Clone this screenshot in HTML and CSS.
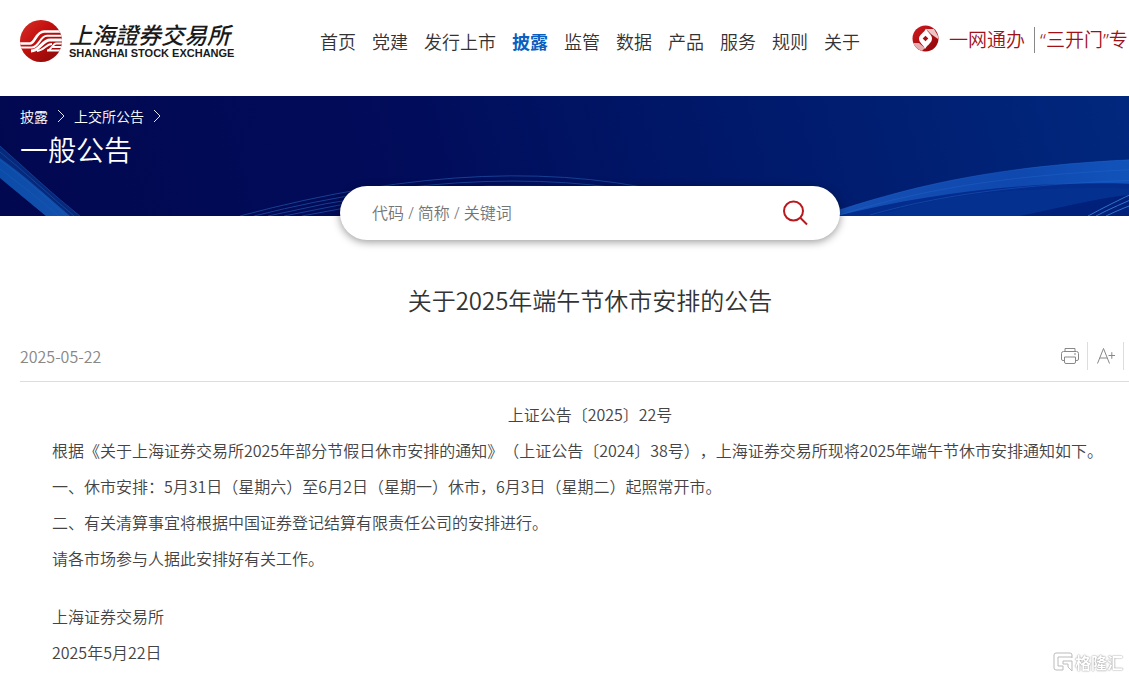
FILE: index.html
```html
<!DOCTYPE html>
<html lang="zh-CN">
<head>
<meta charset="utf-8">
<title>关于2025年端午节休市安排的公告</title>
<link rel="stylesheet" href="styles.css">
</head>
<body>
<div class="page">
  <header class="header">
    <a class="logo" href="#" aria-label="上海證券交易所">
      <svg class="logo-mark" viewBox="0 0 42 42" aria-hidden="true">
        <defs>
          <linearGradient id="mark" x1="0" y1="0" x2="1" y2="1">
            <stop offset="0" stop-color="#d4322c"/>
            <stop offset="0.4" stop-color="#c4100e"/>
            <stop offset="1" stop-color="#860808"/>
          </linearGradient>
          <clipPath id="disc"><circle cx="21" cy="21" r="21"/></clipPath>
        </defs>
        <g clip-path="url(#disc)">
          <rect width="42" height="42" fill="url(#mark)"/>
          <g fill="none" stroke="#fff">
            <path d="M0 23.500H10C15 23.500 16 11.500 24 11.500H42" stroke-width="2.600"/>
            <path d="M0 27.500H12C19 27.500 20 15.800 27 15.800H42" stroke-width="2"/>
            <path d="M11 31C20 31 22 20 30 20H42" stroke-width="3"/>
            <path d="M17 31C24 30.500 26 24 32 24" stroke-width="2"/>
            <path d="M42 23.500H36C33 23.500 31 30.500 27 30.500H42M32 27H42" stroke-width="1.800"/>
          </g>
        </g>
      </svg>
      <span class="logo-text">
        <span class="logo-zh" lang="zh-TW">上海證券交易所</span>
        <span class="logo-en">SHANGHAI STOCK EXCHANGE</span>
      </span>
    </a>
    <nav class="nav">
      <a href="#">首页</a>
      <a href="#">党建</a>
      <a href="#">发行上市</a>
      <a class="active" href="#">披露</a>
      <a href="#">监管</a>
      <a href="#">数据</a>
      <a href="#">产品</a>
      <a href="#">服务</a>
      <a href="#">规则</a>
      <a href="#">关于</a>
    </nav>
    <div class="services">
      <svg class="services-mark" viewBox="0 0 27 27" aria-hidden="true">
        <defs>
          <linearGradient id="seal" x1="0" y1="0" x2="1" y2="1">
            <stop offset="0" stop-color="#d01a1e"/>
            <stop offset="1" stop-color="#8c0508"/>
          </linearGradient>
        </defs>
        <circle cx="13.500" cy="13.500" r="13" fill="url(#seal)"/>
        <path d="M14 4H22L26 11V14L19 9Z" fill="#efc6c7"/>
        <path d="M1 18H7L13 23L10 26Q4 24 1 18Z" fill="#e6aeb0"/>
        <path d="M14 3.500C16 8 20 9.500 20 13.500C20 18 15.500 19.500 13 24C11.500 19.500 7 18 7 13.500C7 9.500 12 8 14 3.500Z" fill="#fff"/>
        <path d="M13.500 10.700L16.300 13.500L13.500 16.300L10.700 13.500Z" fill="#a60c12"/>
      </svg>
      <a href="#">一网通办</a>
      <a class="divided" href="#">“三开门”专</a>
    </div>
  </header>

  <section class="banner">
    <svg class="waves" viewBox="0 0 1180 120" preserveAspectRatio="none" aria-hidden="true">
      <defs>
        <linearGradient id="ribbon" x1="0" y1="0" x2="1" y2="0">
          <stop offset="0" stop-color="#1650b4"/>
          <stop offset="0.5" stop-color="#0f48ae"/>
          <stop offset="1" stop-color="#1257bf"/>
        </linearGradient>
        <linearGradient id="beam" x1="0" y1="0" x2="1" y2="1">
          <stop offset="0" stop-color="#0b4ba8"/>
          <stop offset="1" stop-color="#1250ad"/>
        </linearGradient>
      </defs>
      <path d="M0 50C25 72 52 98 80 120H46L0 82Z" fill="#06297c"/>
      <path d="M0 62C25 80 48 101 70 120H46L0 82Z" fill="url(#beam)"/>
      <g fill="none" stroke="#1f5cb8" stroke-width="1" opacity=".5">
        <path d="M0 50C25 72 52 98 80 120"/>
        <path d="M0 56C25 76 50 100 74 120"/>
        <path d="M0 64C22 80 46 101 66 120"/>
        <path d="M0 73C20 88 40 104 59 120"/>
      </g>
      <g fill="none" stroke="#173f92" stroke-width="1">
        <path d="M240 120Q500 50 690 102"/>
        <path d="M254 120Q500 58 690 106"/>
        <path d="M268 120Q500 65 690 110"/>
        <path d="M284 120Q500 72 690 114"/>
        <path d="M302 120Q500 78 690 118"/>
      </g>
      <path d="M836 115C920 88 1010 66 1180 62V120H836Z" fill="#032c8c"/>
      <path d="M836 115C920 88 1010 66 1180 62V90C1060 82 950 92 836 120Z" fill="url(#ribbon)"/>
      <path d="M900 113C960 95 1050 88 1180 94V98C1110 94 1070 112 1020 120H870Z" fill="#043090"/>
      <path d="M1020 120C1070 110 1110 98 1180 94V120Z" fill="#00207a"/>
      <g fill="none" stroke="#2469ce" stroke-width="1" opacity=".4">
        <path d="M836 115C920 88 1010 66 1180 62"/>
        <path d="M840 119C930 90 1030 76 1180 72"/>
        <path d="M870 119C950 96 1040 86 1180 83"/>
      </g>
      <g fill="none" stroke="#2f74d0" stroke-width="1">
        <path d="M1088 120Q1110 108 1140 94"/>
        <path d="M1096 120Q1115 110 1145 98"/>
        <path d="M1106 120Q1120 113 1150 102"/>
      </g>
    </svg>
    <div class="banner-content">
      <nav class="crumbs" aria-label="位置">
        <a href="#">披露</a>
        <svg viewBox="0 0 8 14" aria-hidden="true"><path d="M1 1L7 7L1 13"/></svg>
        <a href="#">上交所公告</a>
        <svg viewBox="0 0 8 14" aria-hidden="true"><path d="M1 1L7 7L1 13"/></svg>
      </nav>
      <h1 class="section-title">一般公告</h1>
    </div>
    <form class="search">
      <input type="text" aria-label="搜索" placeholder="代码 / 简称 / 关键词">
      <button type="button" aria-label="搜索">
        <svg viewBox="0 0 26 26" aria-hidden="true"><circle cx="11.500" cy="11" r="9.500"/><path d="M18 17.500L25 24.500"/></svg>
      </button>
    </form>
  </section>

  <main class="article">
    <h2 class="title">关于2025年端午节休市安排的公告</h2>
    <div class="meta">
      <time datetime="2025-05-22">2025-05-22</time>
      <div class="tools">
        <button type="button" aria-label="打印">
          <svg viewBox="0 0 20 18" aria-hidden="true"><path d="M5 4.500V1.500H15V4.500M4.500 13.500H3A1.500 1.500 0 0 1 1.500 12V6.500A2 2 0 0 1 3.500 4.500H16.500A2 2 0 0 1 18.500 6.500V12A1.500 1.500 0 0 1 17 13.500H15.500M4.500 10H15.500V15A1.500 1.500 0 0 1 14 16.500H6A1.500 1.500 0 0 1 4.500 15ZM14 7H16"/></svg>
        </button>
        <button type="button" aria-label="放大字号">
          <svg viewBox="0 0 20 18" aria-hidden="true"><path d="M1.500 16.500L7.500 1.500L13.500 16.500M3.800 11H11.200M12.500 8.500H19M15.800 5.200V11.800"/></svg>
        </button>
      </div>
    </div>
    <div class="body">
      <p class="number">上证公告〔2025〕22号</p>
      <p>根据《关于上海证券交易所2025年部分节假日休市安排的通知》（上证公告〔2024〕38号），上海证券交易所现将2025年端午节休市安排通知如下。</p>
      <p>一、休市安排：5月31日（星期六）至6月2日（星期一）休市，6月3日（星期二）起照常开市。</p>
      <p>二、有关清算事宜将根据中国证券登记结算有限责任公司的安排进行。</p>
      <p>请各市场参与人据此安排好有关工作。</p>
      <div class="signature">
        <p>上海证券交易所</p>
        <p>2025年5月22日</p>
      </div>
    </div>
  </main>
</div>
<div class="watermark">
  <svg viewBox="0 0 20 20" aria-hidden="true"><path d="M19 6V3Q19 1 17 1H3Q1 1 1 3V16Q1 18 3 18H10V14H5V5H19M10 9H19V19L15 15V12H10Z"/></svg>
  <span>格隆汇</span>
</div>
</body>
</html>
```
FILE: styles.css
```css
* {
  box-sizing: border-box;
}

body {
  margin: 0;
  overflow: hidden auto;
  background: #fff;
  color: #333;
  font-family: "Noto Sans CJK SC", sans-serif;
  font-size: 16px;
  font-weight: 350;
  text-spacing-trim: space-all;
}

a {
  color: inherit;
  text-decoration: none;
}

p,
h1,
h2 {
  margin: 0;
  font-weight: 350;
}

button {
  padding: 0;
  border: 0;
  background: none;
}

.page {
  min-width: 1180px;
}

.header {
  display: grid;
  grid-template-columns: 1fr auto 1fr;
  align-items: center;
  padding: 0 20px;
  height: 96px;
}

.logo {
  display: flex;
  align-items: center;
  gap: 7px;
  padding-bottom: 14px;
}

.logo-mark {
  width: 42px;
  height: 42px;
}

.logo-text {
  display: flex;
  flex-direction: column;
  color: #1a1a1a;
  font-weight: 700;
  white-space: nowrap;
}

.logo-zh {
  font-family: "Noto Sans CJK TC", sans-serif;
  font-size: 23px;
  font-style: italic;
  font-weight: 500;
  line-height: 25px;
}

.logo-en {
  font-family: "Liberation Sans", sans-serif;
  font-size: 11px;
  line-height: 13px;
}

.nav {
  display: flex;
  gap: 16px;
  padding-bottom: 14px;
  font-size: 18px;
  line-height: 26px;
}

.nav .active {
  color: #0a5fc0;
  font-weight: 700;
}

.services {
  display: flex;
  align-items: center;
  padding: 0 0 16px 52px;
  color: #a01014;
  font-family: "Noto Sans", "Noto Sans CJK SC", sans-serif;
  font-size: 19px;
  line-height: 26px;
  white-space: nowrap;
}

.services-mark {
  width: 27px;
  height: 27px;
  margin: 0 10px 4px 0;
}

.divided {
  margin-left: 9px;
  padding-left: 5px;
  border-left: 1px solid #888;
}

.banner {
  position: relative;
  height: 120px;
  background: linear-gradient(75deg, #020850 0%, #010c5a 35%, #001a6c 65%, #002a80 100%);
}

.waves {
  position: absolute;
  inset: 0;
  width: 100%;
  height: 100%;
}

.banner-content {
  position: relative;
  padding: 9px 20px;
  color: #fff;
}

.crumbs {
  display: flex;
  align-items: center;
  gap: 9px;
  font-size: 14px;
  line-height: 22px;
}

.crumbs svg {
  width: 8px;
  height: 14px;
  fill: none;
  stroke: #dfe3f5;
}

.section-title {
  font-size: 28px;
  line-height: 44px;
}

.search {
  position: absolute;
  top: 90px;
  left: 50%;
  display: flex;
  align-items: center;
  width: 500px;
  height: 54px;
  padding: 0 32px;
  border-radius: 27px;
  background: #fff;
  box-shadow: 0 2px 8px rgba(0, 0, 0, .4);
  transform: translateX(-50%);
}

.search input {
  flex: 1;
  padding: 0;
  border: 0;
  outline: 0;
  background: none;
  color: #333;
  font-family: "Noto Sans", "Noto Sans CJK SC", sans-serif;
  font-size: 16px;
  font-weight: 350;
}

.search input::placeholder {
  color: #757575;
}

.search svg {
  display: block;
  width: 26px;
  height: 26px;
  fill: none;
  stroke: #b8191f;
  stroke-width: 2;
}

.article {
  padding: 64px 20px 0;
}

.title {
  font-size: 24px;
  line-height: 40px;
  text-align: center;
}

.meta {
  display: flex;
  align-items: center;
  justify-content: space-between;
  height: 62px;
  padding: 10px 36px 0 0;
  border-bottom: 1px solid #ddd;
  color: #888;
}

.tools {
  display: flex;
}

.tools button {
  display: flex;
  align-items: center;
  justify-content: center;
  width: 36px;
  height: 28px;
  border-right: 1px solid #ddd;
}

.tools svg {
  width: 20px;
  height: 18px;
  fill: none;
  stroke: #888;
}

.body {
  padding: 14px 32px;
  color: #444;
  line-height: 36px;
}

.number {
  text-align: center;
}

.signature {
  padding-top: 22px;
}

.watermark {
  position: fixed;
  right: 6px;
  bottom: 6px;
  display: flex;
  align-items: center;
  gap: 2px;
  color: #fff;
  font-size: 16px;
  font-weight: 700;
  line-height: 22px;
  text-shadow: 0 0 1px #888, 0 0 2px #aaa;
}

.watermark svg {
  width: 20px;
  height: 20px;
  fill: #fff;
  stroke: #bbb;
}
```
